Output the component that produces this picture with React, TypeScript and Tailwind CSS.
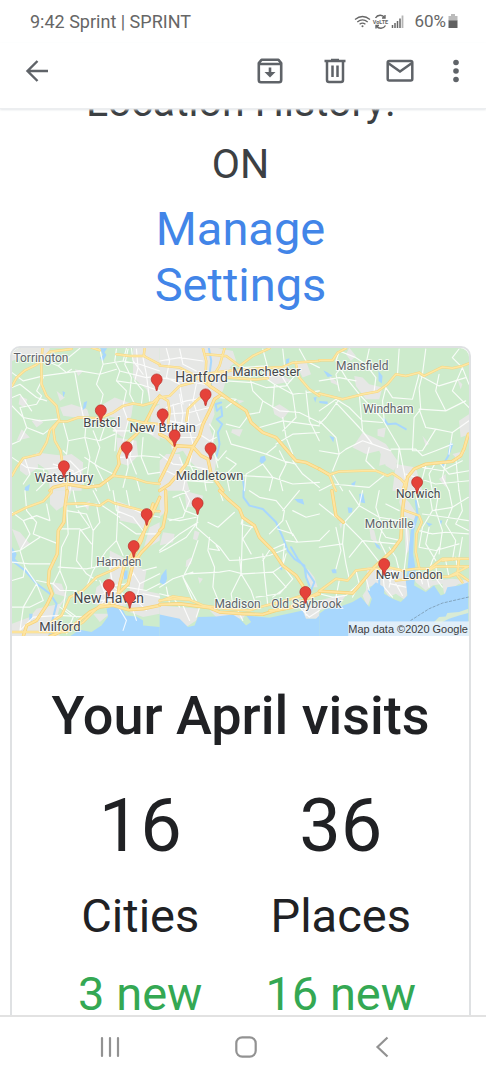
import type { ReactNode } from 'react';

type Label = { text: string; x: number; y: number; size: number; color?: string };

const labels: Label[] = [
  { text: 'Torrington', x: 41, y: 362, size: 12, color: '#5f6368' },
  { text: 'Hartford', x: 202, y: 382, size: 14 },
  { text: 'Manchester', x: 267, y: 376, size: 13 },
  { text: 'Mansfield', x: 363, y: 370, size: 12, color: '#5f6368' },
  { text: 'Windham', x: 389, y: 413, size: 12, color: '#5f6368' },
  { text: 'Bristol', x: 102, y: 427, size: 13 },
  { text: 'New Britain', x: 163, y: 432, size: 13 },
  { text: 'Waterbury', x: 64, y: 482, size: 13 },
  { text: 'Middletown', x: 210, y: 480, size: 13 },
  { text: 'Norwich', x: 419, y: 498, size: 12 },
  { text: 'Montville', x: 390, y: 528, size: 12, color: '#5f6368' },
  { text: 'Hamden', x: 119, y: 566, size: 12, color: '#5f6368' },
  { text: 'New Haven', x: 109, y: 604, size: 14 },
  { text: 'Milford', x: 60, y: 632, size: 13 },
  { text: 'Madison', x: 238, y: 609, size: 12, color: '#5f6368' },
  { text: 'Old Saybrook', x: 307, y: 609, size: 12, color: '#5f6368' },
  { text: 'New London', x: 410, y: 580, size: 12 },
];

const pins = [
  [157, 390], [206, 405], [101, 421], [163, 425], [175, 446], [127, 458], [211, 459],
  [64, 477], [418, 493], [198, 514], [147, 525], [134, 557], [385, 575], [109, 596],
  [306, 603], [130, 608],
];

type Tile = { x: number; y: number; urban: string; water?: string; minor: string; major: string; wide?: string; rivers?: string };

const tiles: Tile[] = [
  {
    x: -36,
    y: -21,
    urban:
      'M36 20H150L140 55L110 60L90 40L36 60ZM180 200L215 190L262 205L268 225L230 230L190 225ZM310 190L345 170L400 190L395 225L370 290L340 270L345 230L310 225ZM110 335L190 345L215 340L250 365L245 450H150L145 390L100 360ZM350 290L410 300L415 345L385 375L355 365ZM60 165L82 175L75 200L56 190ZM95 240L120 235L130 245L110 260ZM400 20L480 20V190L455 185L440 145L400 110ZM455 205L480 190V300L450 280ZM60 360L110 345L115 380L80 405L60 390ZM65 265L90 290L50 300ZM170 150L195 170L180 180ZM225 85L250 90L235 105Z',
    water:
      'M300 22L322 22L314 34L320 42L308 62L300 50L310 42ZM188 150L196 155L190 170ZM252 185L262 180L258 200L248 208ZM75 440L90 430L86 450H74Z',
    minor:
      'M36 95L70 120L130 105L240 90L300 100L350 85M36 140L60 130L110 170L140 180M130 110L110 150L125 165L110 190L60 200M140 60L175 75L240 22M175 75L200 95L215 85M225 95L240 180L250 225M300 24L310 70L290 130L310 160L300 200M310 70L370 60L380 22M350 24L345 60L360 90L350 120L380 150L370 195M385 24L375 70L395 110L390 160L405 190M410 24L415 80L405 120L430 150L425 190M370 60L420 70L480 90M360 90L440 110L480 105M350 120L420 130L480 150M430 50L440 100L450 180M395 22L400 60L430 100M36 195L70 230L120 240L175 235M60 200L80 260L60 300L36 310M80 260L130 280L150 265M190 245L205 300L200 340L190 330M260 235L255 290L270 350L260 420M205 300L255 290L300 300L345 280M280 270L300 320L285 370L310 420M300 300L320 240L350 270L345 330M255 350L300 380L340 400M370 200L385 240L370 300M340 270L420 270L460 280M380 310L385 380L370 440M400 300L390 350L410 400M360 350L430 345L480 350M430 290L425 350L445 400L480 395M36 350L80 380L130 385L180 380M75 355L90 400L70 430M130 385L140 420L110 450M210 360L240 390L250 430M160 370L220 390L210 450M150 400L200 410L260 380M280 430L290 450M320 415L330 450M410 412L420 450M36 170L60 160L95 210',
    major:
      'M36 135L50 110L75 88L108 72L125 58L150 32L215 24M128 20L124 60L125 130L140 165L170 195L178 238L160 266L165 300L182 330L190 385L200 420V450M178 242L205 241L235 230L300 232L340 215L370 195L400 188L430 193L460 185L480 165M178 238L150 268L140 305L120 340L70 352L50 380L36 405M435 20L432 45L480 70M350 40L390 45H435M385 235L430 245L480 250M340 405L400 412L440 425L480 430M276 20L300 28',
    wide: 'M480 165L460 200L440 240L410 280L365 320L355 345L358 370L340 405L300 435L260 440L200 430L160 440L150 450',
  },
  {
    x: 444,
    y: -21,
    urban:
      'M0 20H170L220 30L230 60L210 80L235 100L200 115L190 150L160 180L165 220L150 260L165 300L150 330L170 360L165 400L120 390L90 360L70 330L40 340L30 300L0 290ZM320 90L370 105L400 120L350 130L320 115ZM340 200L360 190L390 210L370 235L345 220ZM218 265L250 265L240 288L215 275ZM20 340L60 340L90 450H0V360ZM410 70L440 60L455 100L430 110ZM230 175L255 180L240 188Z',
    water:
      'M303 348L316 345L320 358L308 370L300 362ZM380 55L390 52L386 80L380 75ZM462 170L472 168L468 185Z',
    rivers: 'M148 22L155 60L150 100L156 140M185 185L168 190L172 210L185 198L188 225L172 235L188 250L175 275L180 310L170 350M250 415L255 450',
    minor:
      'M20 22L30 60L20 110L60 130L70 190M60 24L70 70L110 90M0 60L60 50L130 60M0 110L70 120L135 130M20 200L80 180L140 170M20 220L90 215L150 200M30 240L110 255L140 240M60 160L70 220L60 290M40 190L50 260L40 320M90 190L85 250L100 310M110 130L100 180L120 240M0 260L60 290L110 290M120 280L150 300L170 290M150 250L165 270L155 320L175 360L200 330M200 120L280 125L320 140L380 135L410 100M270 100L280 150L310 180L300 215L270 220M310 180L360 210L420 215L480 245M250 80L310 75L370 90M310 24L325 80L315 110L345 130L340 200M370 24L375 70L370 110L400 160L410 230L370 270M420 24L440 60L480 80M410 60L420 100M345 130L400 160L480 150M270 220L240 260L200 250M300 260L370 240L480 255M370 230L380 290L400 340M180 170L230 175L200 200M200 270L215 310L270 325L320 340L350 315M350 310L400 280L480 275M310 370L260 400L255 450M310 370L340 410L330 450M320 340L370 360L410 370M200 350L230 370L200 400L210 450M360 330L380 370L360 410L370 450M250 405L340 410L400 430L480 425M400 360L430 400L480 440M0 340L40 370L90 375L140 385M60 350L80 400L70 450M20 390L80 420L160 425M100 320L90 370L110 410M130 390L140 450M160 320L175 380M440 150L450 240L480 300',
    major:
      'M0 74L60 80L100 100L150 135L180 155M130 22L140 60L138 100L150 135M195 22L180 75L155 115L150 135M140 40L200 45L240 75L280 45L330 22M160 100L220 88L310 82L370 78L400 65L480 60M410 70L420 110L450 145L480 165M100 120L130 100L200 90M200 110L290 116L325 112M0 170L30 165L60 135L100 125M0 165L25 180L30 210L25 250M80 240L85 205L110 180L140 155',
    wide: 'M150 135L180 155L215 180L260 210L275 245L310 275L350 290L380 325L410 360L440 365L480 385M180 165L165 175L150 210L130 250L120 285L100 318L50 315L25 370L0 420M100 318L80 370L30 430L0 450M100 318L125 345L145 355L155 400L190 450M45 315L20 290L0 280',
  },
  {
    x: 924,
    y: -21,
    urban:
      'M90 20L110 45L95 60L80 40ZM105 105L130 110L150 130L190 140L180 175L140 175L110 135ZM130 275L165 290L200 310L235 360L225 390L200 375L180 330L140 340L100 320ZM175 265L200 260L195 290L175 285ZM420 240L450 220V280L425 290ZM230 370L290 380L310 450H220ZM30 105L50 120L60 135L35 125ZM415 115L430 130L425 145ZM310 285L330 310L320 315ZM185 340L200 370L180 375ZM400 340L440 330L420 360ZM360 415L380 400L380 440Z',
    water:
      'M12 88L25 95L40 105L25 108ZM178 90L190 105L188 128L178 120ZM30 285L45 290L42 305ZM393 305L403 310L392 340L386 345ZM95 430L110 420L105 438ZM0 180L25 182V190L0 186Z',
    rivers: 'M195 235L205 250L230 248L260 265M395 310L388 345L370 375',
    minor:
      'M60 30L50 60L80 110L120 160L190 235L240 320L235 380M150 24L140 70L170 110L165 150M240 24L235 100M320 24L310 100L300 140L305 205L285 230L280 330M0 210L50 175L90 200L130 240L190 245M60 175L20 230L0 250M50 185L120 260L160 310L215 330M0 240L50 290L60 340L40 390M80 60L50 100L60 150M120 160L130 270L160 310M200 140L220 170L280 175L300 100M200 140L190 180L195 240M300 205L380 210L440 180M360 100L350 150L380 210M305 105L360 135L440 110M420 24L400 50L430 80L450 130M430 80L400 150L450 200M300 205L320 260L350 265L400 275L450 240M350 265L310 330L280 330M400 275L390 340M215 325L290 325L310 345L350 330L400 310M80 325L130 300L160 310M0 330L60 340L80 325M150 320L140 360L170 390M240 320L250 370L260 420M60 30L110 50L140 70M0 120L60 110L110 120M350 365L330 400L340 450M380 365L370 410L390 450M310 380L370 390L430 360M410 350L420 450M40 400L70 450M0 450L40 430L150 440L200 400M260 400L350 430L450 420M360 365L390 400L450 390M320 375L300 450',
    major:
      'M0 58H40L55 35L80 22M0 158L70 175L130 160L175 152L205 130L230 100L260 105L300 95L315 105L370 78L400 82L430 75L448 68M260 420L250 450M0 385L30 402L60 392L130 390L170 390L205 405L220 398L245 415L258 430M30 402L45 440L50 450',
    wide: 'M448 280L435 325L425 345L400 362L320 370L285 385L265 410L258 450M0 385L30 402',
  },
  {
    x: -36,
    y: 429,
    urban:
      'M150 0H215L200 40L170 60L150 40ZM350 30L430 60L440 120L410 100L360 90ZM330 180L370 200L375 260L350 290L380 345L330 350L280 340L290 290L330 260ZM110 355L180 340L205 310L180 350L165 400L180 438H36V400L90 380ZM390 220L440 240L430 300L480 310V370L430 380L390 365ZM450 110L480 95V150L430 180ZM280 370L330 370L300 395ZM155 275L185 280L200 320L165 310ZM36 115L60 125L90 160L60 175ZM250 40L270 30L265 60Z',
    water:
      'M345 345L365 352L378 375L410 378L430 390L430 405L480 410V438H210L240 418L275 425L305 405L325 378L320 355ZM36 170L50 190L45 205L55 215L36 210ZM373 240L384 240L382 265L372 268ZM88 370L98 370L95 390L88 388ZM155 420L168 390L165 438H148Z',
    rivers: 'M36 210L75 240L110 280L150 310L170 340L155 400L148 438',
    minor:
      'M36 65L70 90L110 75L150 90L140 40M70 90L90 130L60 180L75 230M75 0L80 60L110 95L100 130L175 160M36 185L60 180L120 140M36 215L90 220L150 220M75 230L70 260L36 270M75 230L110 280L130 330M110 280L70 350L60 420M130 330L90 350L36 350M200 45L205 130L185 170L180 240L200 290M200 60L260 70L280 120L275 230M220 0L230 50L290 40L300 95L280 120M235 60L270 110L240 120L230 210L260 250L290 270M180 115L240 115L275 160M175 230L260 235L310 225L360 230M280 0L300 40M355 40L350 150L370 195M350 150L320 180L280 240L260 290M350 60L400 80L430 120M380 0L390 50L430 70L480 80M340 0L350 60M360 95L410 130L480 130M300 40L360 80M180 240L160 280L180 300L230 300M200 290L190 350L230 380M160 280L110 270M300 270L320 320L300 350M330 230L340 290L370 310M310 290L380 280L400 250M310 310L370 300M290 330L350 330M390 230L420 280L410 330L440 360M380 290L440 300L480 280M420 280L480 250M350 340L380 390L370 420M400 360L410 390M430 310L480 320M430 240L470 230M330 200L370 220L365 260M180 350L220 380L200 430M60 420L100 380L180 375L260 380',
    major:
      'M36 72L80 50L130 32L155 5V0M200 40L250 38L300 45L325 28L345 38L390 50L430 60L480 62M36 425H140L200 425L250 395L300 345L350 335M140 405L185 375L210 320L250 300L290 260L340 238L380 215L410 200',
    wide: 'M202 0L195 50L192 95L175 120L172 190L148 240L145 280L157 310L140 345L110 390L80 405L70 438M480 20L440 110L395 195L375 220L360 280L355 310M480 125L450 160L425 185L400 220L385 280L360 305M150 438L215 410L270 365L300 350L340 345L385 358L430 355L480 345M460 40L425 150L400 200',
  },
  {
    x: 444,
    y: 429,
    urban:
      'M0 0H25L20 60L0 80ZM75 0L130 15L125 45L80 50ZM10 125L45 130L40 155L0 165ZM0 345L120 355L110 390L80 410L50 385L0 375ZM105 120L120 125L112 150L100 145ZM80 210L95 200L95 220L78 230ZM150 360L260 370L250 385L170 380ZM445 235L465 260L475 290H455L440 265ZM420 345L480 340V385H435ZM115 260L130 265L120 280Z',
    water:
      'M0 372L35 380L60 385L85 410L105 405L115 380L170 378L220 372L240 385L260 405L275 395L260 375L330 382L410 365L430 360L440 385L470 385L480 375V438H0ZM5 255L20 235L22 265L15 285L0 275ZM345 195L355 188L350 205ZM405 25L430 25L435 42L415 35ZM362 215L370 212L368 240L360 235Z',
    rivers: 'M252 0L252 20L270 45L310 55L350 95L370 140L385 180L405 205L435 225L440 260L450 285M395 170L415 205L435 230L465 275L455 300',
    minor:
      'M60 20L75 60L115 75M75 0L90 30L70 80L30 90M115 75L110 110L150 145L180 170L210 210L250 208L330 195L380 175M115 95L60 130L0 180M110 100L80 140L20 175L0 185M115 150L95 210L70 260L100 330M150 140L145 180L165 230L160 290L180 340M250 80L245 250M240 200L245 250L215 310L220 345M245 250L275 300L290 345M80 250L180 245L210 240L250 250L340 245L370 225L400 265M0 290L40 265L100 245M70 260L110 330M145 95L175 110L225 65M280 105L250 145L275 190M250 80L245 100L280 110M310 190L315 250L325 345M370 220L375 160L330 180L310 210M330 130L370 90L375 60L350 30M355 115L400 130L415 155L380 150M400 60L440 80L480 70M410 155L480 150M370 60L420 0M270 0L300 20L350 30M180 0L190 30M380 90L400 135M0 310L40 320L60 350M20 290L30 340M70 345L90 390M120 350L110 380M170 165L180 180L150 175M380 190L370 225M340 245L380 290L340 320M400 265L360 310L290 320M420 350L450 380L480 360M430 330L440 375M230 350L250 390M25 85L60 90L110 80M40 20L90 0',
    major: 'M0 330L45 325L90 328L130 345L200 355L270 360L320 345L400 325L430 315M0 332L40 318L90 325M330 360L380 355L430 330L480 305',
    wide: 'M0 342L60 340L150 352L180 365L250 370L310 372L350 360L400 350L440 325L480 310M180 0L205 25L240 55L250 80L285 105L300 140L340 180L370 225L410 255L430 285L440 315M18 0L20 60L10 110L0 120',
  },
  {
    x: 924,
    y: 429,
    urban:
      'M245 10L270 35L290 65L285 90L255 75L240 35ZM255 100L270 120L275 170L260 195ZM145 230L240 235L270 270L260 330L230 310L210 320L180 280L145 290L155 320L145 350L130 315L140 300ZM275 240L320 250L340 270L400 265L448 270V280L420 280L375 310L370 280L340 285L320 300L290 275ZM60 100L70 95L65 115ZM150 110L165 120L175 160L155 145ZM0 330L40 320L80 315L60 340L0 360Z',
    water:
      'M0 370L20 355L60 350L100 335L125 320L150 350L158 325L145 300L170 275L195 290L195 310L220 325L245 335L265 315L260 270L265 240L270 180L275 120L295 70H300L285 120L282 190L290 240L285 285L320 305L345 285L365 315L378 310L385 290L420 285L448 275V438H0ZM120 10L132 8L138 38L122 35ZM85 50L100 52L98 65L88 68ZM165 155L180 165L185 178L172 170ZM320 95L340 100L330 108ZM360 90L370 90L365 105ZM36 238L50 235L52 248L40 248Z',
    rivers: 'M290 30L295 70L280 110L272 180L275 250M180 265V300',
    minor:
      'M0 40L50 80L75 95L130 150L180 215M75 95L120 45L90 0M120 45L180 80L240 90M180 0L170 50L190 110L180 150L200 190M130 0L120 45M200 40L240 60M75 100L70 160L80 220L90 265M0 170L70 160M30 120L0 150M90 200L130 150L230 160M180 110L200 140L245 150M50 110L65 180L50 235M300 120L340 130L380 125L448 130M330 0L340 60L310 110L300 170M360 0L350 60L370 120L360 190M390 0L400 50L380 100L410 150L400 210M420 0L430 60L410 100L448 120M310 70L380 80L448 90M340 60L400 50L448 20M300 170L350 180L420 160M330 110L320 160L350 210M360 170L340 210L330 240M430 140L420 200M210 170L230 200L240 240M260 80L265 160L255 240M190 240L195 290L220 320M200 245L215 280L260 290M220 240L210 290M230 280L250 315M320 240L330 290M350 220L355 270L370 290M380 210L390 260M410 200L420 260M110 240L120 280L100 320M60 270L50 320M140 260L150 300M0 310L40 320L80 315L120 280M300 240L310 280M290 10L300 50',
    major:
      'M0 302L50 265L85 270L110 240L150 235L180 235L215 232L250 240L290 235L330 235L370 205L448 205M230 270L300 262L390 258L448 228M370 210L420 205L415 255L430 275M258 60L300 75L308 95L292 130L290 185L300 230M330 240L350 228L448 228M390 258L420 250L448 270',
    wide: 'M0 302L100 308L120 285L165 230L220 180L245 145L250 60L258 0M38 0L50 75L72 95',
  },
];

function CityMap() {
  return (
    <svg viewBox="0 0 458 289" className="block w-full rounded-t-[9px]" role="img" aria-label="Visited places in Connecticut">
      <rect width="458" height="289" fill="#cdebcc" />
      <g transform="scale(.3333333)" fill="none" strokeLinejoin="round" strokeLinecap="round">
        {tiles.map((t, i) => (
          <g key={`u${i}`} transform={`translate(${t.x} ${t.y})`}>
            <path d={t.urban} fill="#e6e7e5" />
            <path d={t.water} fill="#a8d7fd" />
            <path d={t.rivers} stroke="#a8d7fd" strokeWidth="6" />
          </g>
        ))}
        {tiles.map((t, i) => (
          <path key={`m${i}`} transform={`translate(${t.x} ${t.y})`} d={t.minor} stroke="#ffffff" strokeOpacity=".85" strokeWidth="3.5" />
        ))}
        {tiles.map((t, i) => (
          <g key={`a${i}`} transform={`translate(${t.x} ${t.y})`}>
            <path d={t.major} stroke="#f8d67f" strokeWidth="7.5" />
            <path d={t.wide} stroke="#f7d277" strokeWidth="10" />
            <path d={t.major} stroke="#fde7a4" strokeWidth="4.5" />
            <path d={t.wide} stroke="#fee4a0" strokeWidth="6" />
          </g>
        ))}
        <g transform="translate(924 429)">
          <path d="M345 395L360 380L380 378L385 368L420 365L448 355V368L420 375L390 385L360 400Z" fill="#d9ebd5" />
          <path d="M275 390L330 355L370 338L448 320" stroke="#83a4bd" strokeWidth="3" strokeDasharray="7 6" />
        </g>
      </g>
      <g transform="translate(-12 -348)" fontFamily="Roboto, sans-serif" textAnchor="middle">
        {labels.map((l) => (
          <text
            key={l.text}
            x={l.x}
            y={l.y}
            fontSize={l.size}
            fill={l.color ?? '#45484c'}
            stroke="#ffffff"
            strokeWidth="2"
            strokeOpacity=".75"
            paintOrder="stroke"
          >
            {l.text}
          </text>
        ))}
      </g>
      <g transform="translate(-12 -347)">
        {pins.map(([x, y]) => (
          <path
            key={`${x}-${y}`}
            transform={`translate(${x} ${y})`}
            d="M0 0C-.8 0-.7-3-1.7-5-3-7-5.5-8.400-5.500-11.500A5.500 5.500 0 0 1 5.500-11.500C5.500-8.400 3-7 1.700-5 .7-3 .8 0 0 0Z"
            fill="#e5423a"
            stroke="#b62d27"
            strokeWidth=".7"
          />
        ))}
      </g>
      <rect x="337" y="274" width="121" height="15" fill="#eef4f8" fillOpacity=".8" />
      <text x="397" y="286" fontSize="11" fill="#3c3c3c" textAnchor="middle" fontFamily="Liberation Sans, sans-serif">
        Map data ©2020 Google
      </text>
    </svg>
  );
}

function IconButton({ label, children, className }: { label: string; children: ReactNode; className: string }) {
  return (
    <button type="button" aria-label={label} className={`flex h-10 items-center justify-center ${className}`}>
      {children}
    </button>
  );
}

function StatusBar() {
  return (
    <div className="flex h-[43px] shrink-0 items-center justify-between pr-[28px] pl-[30px] text-[17px] text-[#666]">
      <span className="text-[18px]">9:42 Sprint | SPRINT</span>
      <div className="flex items-center">
        <svg width="52" height="16" viewBox="0 0 52 16" fill="none" stroke="#666" aria-hidden="true">
          <path d="M1 5.500Q8.500-.5 16 5.500M3.300 8Q8.500 3.700 13.700 8M5.600 10.300Q8.500 8 11.400 10.300" strokeWidth="1.300" />
          <circle cx="8.500" cy="12.300" r="1" fill="#666" stroke="none" />
          <path d="M21.500 4C23.500 .5 28.500 .3 30.500 3.500M31 1V4H28M31.500 11.500C29.500 15 24.500 15 22.500 12M22 14.500V11.500H25" strokeWidth="1.400" />
          <text x="26.500" y="9.500" fontSize="5.500" fontWeight="700" textAnchor="middle" fill="#666" stroke="none" fontFamily="Roboto, sans-serif">VoLTE</text>
          <path d="M38.500 11V14M41 9V14M43.500 7V14M46 4.500V14" strokeWidth="1.500" />
          <path d="M48.500 1.500V14" stroke="#b5b5b5" strokeWidth="1.800" />
        </svg>
        <span className="ml-[8px]">60%</span>
        <svg className="ml-[2px]" width="10" height="15" viewBox="0 0 10 15" aria-hidden="true">
          <path d="M3 0H7V2H9.500V7H.5V2H3Z" fill="#bbb" />
          <path d="M.5 6.500H9.500V14H.5Z" fill="#606060" />
        </svg>
      </div>
    </div>
  );
}

function Toolbar() {
  return (
    <header className="relative z-10 flex h-[66px] shrink-0 items-start justify-between border-b border-[#eceef0] bg-white pt-[8px] pr-[6px] pl-[17px] shadow-[0_1px_2px_#e4e6e9]">
      <IconButton label="Back" className="w-10">
        <svg width="24" height="24" viewBox="0 0 24 24" fill="none" stroke="#5f6368" strokeWidth="2.400" aria-hidden="true">
          <path d="M23 12H3M12.500 2L2.500 12L12.500 22" />
        </svg>
      </IconButton>
      <div className="flex">
        <IconButton label="Archive" className="w-[65px]">
          <svg width="26" height="26" viewBox="0 0 26 26" fill="none" stroke="#5f6368" strokeWidth="2.600" aria-hidden="true">
            <path d="M1.800 5L4.500 1.800H21.500L24.200 5V22Q24.200 24.200 22 24.200H4Q1.800 24.200 1.800 22ZM2 6H24" strokeLinejoin="round" />
            <path d="M13 9.500V15" />
            <path d="M7.500 14H18.500L13 19.500Z" fill="#5f6368" stroke="none" />
          </svg>
        </IconButton>
        <IconButton label="Delete" className="w-[65px]">
          <svg width="24" height="26" viewBox="0 0 24 26" fill="none" stroke="#5f6368" strokeWidth="2.500" aria-hidden="true">
            <path d="M1.500 3H22.500M8 2H16M4 3V22Q4 24 6 24H18Q20 24 20 22V3M9.500 7.500V19M14.500 7.500V19" />
          </svg>
        </IconButton>
        <IconButton label="Mark as unread" className="w-[65px]">
          <svg width="28" height="24" viewBox="0 0 28 24" fill="none" stroke="#5f6368" strokeWidth="2.500" aria-hidden="true">
            <rect x="1.700" y="2" width="24.600" height="19.500" rx="1.500" />
            <path d="M2 4L14 12.500L26 4" />
          </svg>
        </IconButton>
        <IconButton label="More options" className="w-[48px]">
          <svg width="6" height="24" viewBox="0 0 6 24" fill="#5f6368" aria-hidden="true">
            <circle cx="3" cy="3.500" r="2.800" />
            <circle cx="3" cy="12" r="2.800" />
            <circle cx="3" cy="20.500" r="2.800" />
          </svg>
        </IconButton>
      </div>
    </header>
  );
}

function Stat({ value, name, added }: { value: string; name: string; added: string }) {
  return (
    <div className="flex flex-col items-center">
      <span className="text-[74px] leading-[88px]">{value}</span>
      <span className="mt-[7px] text-[47px] leading-[78px]">{name}</span>
      <span className="text-[47px] leading-[78px] text-[#34a853]">{added}</span>
    </div>
  );
}

function NavigationBar() {
  return (
    <nav className="grid h-[65px] shrink-0 grid-cols-[1fr_136px_136px_136px_1fr] items-center border-t-2 border-[#e2e2e2] bg-white pb-[3px] pl-[5px]">
      <button type="button" aria-label="Recent apps" className="col-start-2 flex justify-center">
        <svg width="20" height="22" viewBox="0 0 20 22" stroke="#929292" strokeWidth="2.200" strokeLinecap="round" aria-hidden="true">
          <path d="M2 2V20M10 2V20M18 2V20" />
        </svg>
      </button>
      <button type="button" aria-label="Home" className="flex justify-center">
        <svg width="22" height="22" viewBox="0 0 22 22" fill="none" stroke="#929292" strokeWidth="2.200" aria-hidden="true">
          <rect x="1.300" y="1.300" width="19.400" height="19.400" rx="6" />
        </svg>
      </button>
      <button type="button" aria-label="Back" className="flex justify-center">
        <svg width="14" height="22" viewBox="0 0 14 22" fill="none" stroke="#929292" strokeWidth="2.200" aria-hidden="true">
          <path d="M12.500 1.500L2.500 11L12.500 20.500" />
        </svg>
      </button>
    </nav>
  );
}

export default function App() {
  return (
    <div className="flex h-screen flex-col overflow-hidden bg-white font-[Roboto,sans-serif] text-[#202124]">
      <StatusBar />
      <Toolbar />
      <main className="min-h-0 flex-1 overflow-hidden pr-[15px] pl-[10px]">
        <section className="-mt-[38px] flex flex-col items-center text-center text-[41px] leading-[62px] text-[#3c4043]">
          <p>Location History:</p>
          <p>ON</p>
          <a href="#settings" className="mt-[6px] w-[200px] text-[47px] leading-[56px] text-[#4285e8]">
            Manage Settings
          </a>
        </section>
        <article className="mt-[33px] rounded-[10px] border-2 border-[#dfe1e3]">
          <CityMap />
          <h1 className="mt-[46px] text-center text-[54px] leading-[68px] font-medium">Your April visits</h1>
          <div className="mt-[32px] grid grid-cols-2 px-[28px] pb-[60px]">
            <Stat value="16" name="Cities" added="3 new" />
            <Stat value="36" name="Places" added="16 new" />
          </div>
        </article>
      </main>
      <NavigationBar />
    </div>
  );
}
